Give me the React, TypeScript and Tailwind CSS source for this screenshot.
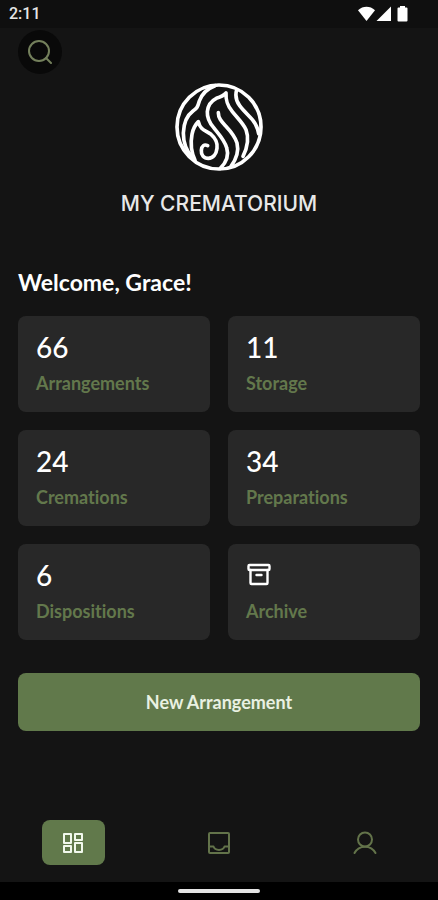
import type { ReactNode } from 'react';

function StatusBar() {
  return (
    <header className="flex h-7 items-center justify-between bg-[#0f0f0f] pr-[29px] pl-[9px]">
      <span className="font-['Roboto',sans-serif] text-base font-medium text-[#e6e6e6]">2:11</span>
      <svg width="52" height="18" viewBox="0 0 52 18" fill="#fff" aria-hidden="true">
        <path d="M1 5.2C6 .6 13 .6 18 5.2L9.500 16Z" />
        <path d="M34 1.500V16H19.500Z" />
        <path d="M43 1h5v1.500h1.500q1 0 1 1v12q0 1-1 1h-8q-1 0-1-1v-12q0-1 1-1H43Z" />
      </svg>
    </header>
  );
}

function FlameLogo() {
  return (
    <svg
      className="size-[90px]"
      viewBox="29 21 270 270"
      fill="none"
      stroke="#fff"
      strokeWidth="11"
      strokeLinecap="round"
      strokeLinejoin="round"
      aria-hidden="true"
    >
      <circle cx="164" cy="156" r="126" />
      <path d="M152 32C126 42 112 58 105 78C100 96 98 100 86 108C64 124 58 148 57 174C57 204 68 230 84 246" />
      <path d="M92 256C82 234 78 204 83 178C86 162 92 150 102 140C108 166 124 166 140 178C154 190 160 204 158 220C156 238 146 250 132 250C118 250 110 240 111 226C112 212 120 207 130 212" />
      <path d="M168 280C186 262 194 240 187 218C180 194 164 178 148 158C136 144 128 128 129 110C131 90 140 78 156 70C168 66 178 62 185 54C184 76 188 90 204 110C220 130 236 144 245 164C254 188 250 216 236 244" />
      <path d="M162 113C162 130 172 140 184 153C200 170 212 184 218 204C224 228 216 252 200 274" />
      <path d="M217 44C212 62 214 76 226 92C238 108 252 120 264 134C274 146 280 158 283 176" />
    </svg>
  );
}

function ArchiveIcon() {
  return (
    <svg className="size-[26px]" viewBox="0 0 26 26" fill="none" stroke="currentColor" strokeWidth="2.400" strokeLinejoin="round" strokeLinecap="round" aria-hidden="true">
      <rect x="2.500" y="3" width="21" height="5" rx="1" />
      <path d="M4.500 8v13q0 1 1 1h15q1 0 1-1V8M10.500 13h5" />
    </svg>
  );
}

type Stat = { value: ReactNode; label: string };

const stats: Stat[] = [
  { value: '66', label: 'Arrangements' },
  { value: '11', label: 'Storage' },
  { value: '24', label: 'Cremations' },
  { value: '34', label: 'Preparations' },
  { value: '6', label: 'Dispositions' },
  { value: <ArchiveIcon />, label: 'Archive' },
];

function StatCard({ value, label }: Stat) {
  return (
    <button type="button" className="flex h-24 flex-col items-start rounded-lg bg-[#282828] px-[18px] pt-[15px] text-left">
      <span className="flex h-8 items-center text-[28px] leading-8 font-medium text-white">{value}</span>
      <span className="mt-2 text-lg leading-6 font-bold text-[#63784c]">{label}</span>
    </button>
  );
}

function Nav() {
  return (
    <nav className="grid grid-cols-3 justify-items-center pb-[17px]">
      <button type="button" aria-label="Dashboard" aria-current="page" className="flex h-[45px] w-[63px] items-center justify-center rounded-lg bg-[#61794b] text-[#f1f8ec]">
        <svg className="size-6" viewBox="0 0 24 24" fill="none" stroke="currentColor" strokeWidth="2" strokeLinejoin="round" aria-hidden="true">
          <rect x="3" y="3" width="7" height="9" />
          <rect x="14" y="3" width="7" height="6" />
          <rect x="3" y="15" width="7" height="6" />
          <rect x="14" y="12" width="7" height="9" />
        </svg>
      </button>
      <button type="button" aria-label="Inbox" className="flex h-[45px] w-[63px] items-center justify-center text-[#63734a]">
        <svg className="size-6" viewBox="0 0 24 24" fill="none" stroke="currentColor" strokeWidth="2" strokeLinejoin="round" aria-hidden="true">
          <rect x="2" y="2" width="20" height="20" rx="1" />
          <path d="M2 15.500h4.500C8 20 16 20 17.500 15.500H22" />
        </svg>
      </button>
      <button type="button" aria-label="Profile" className="flex h-[45px] w-[63px] items-center justify-center text-[#63734a]">
        <svg className="size-6" viewBox="0 0 24 24" fill="none" stroke="currentColor" strokeWidth="2" strokeLinecap="round" aria-hidden="true">
          <circle cx="12" cy="8.500" r="7" />
          <path d="M1.500 22C6 13.500 18 13.500 22.500 22" />
        </svg>
      </button>
    </nav>
  );
}

export default function App() {
  return (
    <div className="flex min-h-screen flex-col bg-[#141414] font-['Lato','Noto_Sans',sans-serif] text-white [font-variant-ligatures:none]">
      <StatusBar />
      <main className="flex flex-1 flex-col px-[18px] pt-0.5">
        <button type="button" aria-label="Search" className="flex size-11 items-center justify-center rounded-full bg-[#090909] text-[#74805c]">
          <svg className="size-6" viewBox="0 0 24 24" fill="none" stroke="currentColor" strokeWidth="2" strokeLinecap="round" aria-hidden="true">
            <circle cx="11" cy="11" r="10" />
            <path d="M18 18l5 5" />
          </svg>
        </button>
        <div className="mt-2 flex flex-col items-center">
          <FlameLogo />
          <p className="mt-5 font-['Inter',sans-serif] text-[21px] leading-6 font-medium text-[#e8e8e8]">MY CREMATORIUM</p>
        </div>
        <h1 className="mt-[50px] text-[23px] leading-8 font-bold">Welcome, Grace!</h1>
        <div className="mt-[18px] grid grid-cols-2 gap-[18px]">
          {stats.map((stat) => (
            <StatCard key={stat.label} {...stat} />
          ))}
        </div>
        <button type="button" className="mt-[33px] h-[58px] rounded-lg bg-[#61794b] text-lg font-bold text-[#e9f1e2]">
          New Arrangement
        </button>
      </main>
      <Nav />
      <footer className="flex h-[18px] items-center justify-center bg-black">
        <div className="h-1 w-[82px] rounded-full bg-[#e4e4e4]" />
      </footer>
    </div>
  );
}
